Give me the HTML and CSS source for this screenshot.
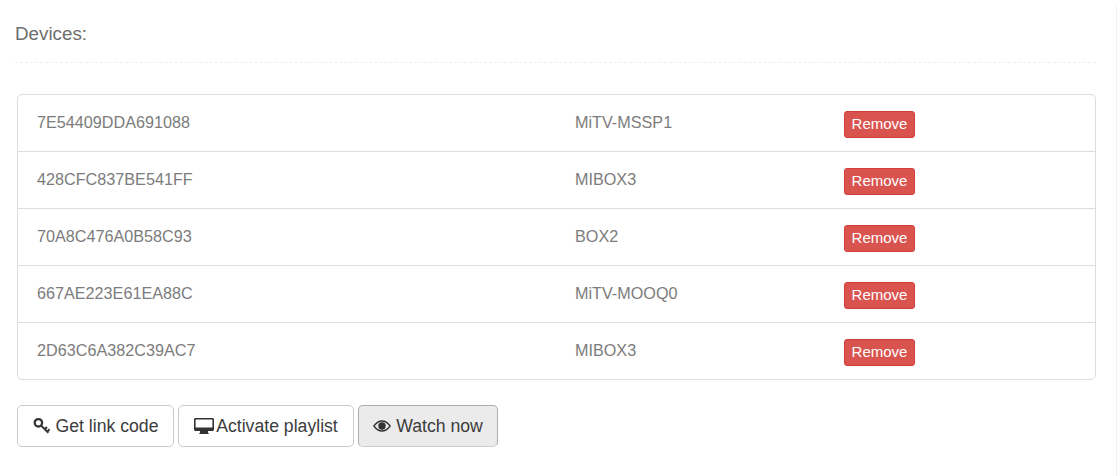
FILE: index.html
```html
<!DOCTYPE html>
<html lang="en">
  <head>
    <meta charset="UTF-8" />
    <title>Devices</title>
    <link rel="stylesheet" href="styles.css">
  </head>
  <body>
    <div class="panel">
      <h4 class="panel-title">Devices:</h4>

      <div class="devices">
        <div class="device">
          <span class="device-id">7E54409DDA691088</span>
          <span class="device-name">MiTV-MSSP1</span>
          <span class="device-action"><button class="btn-remove">Remove</button></span>
        </div>
        <div class="device">
          <span class="device-id">428CFC837BE541FF</span>
          <span class="device-name">MIBOX3</span>
          <span class="device-action"><button class="btn-remove">Remove</button></span>
        </div>
        <div class="device">
          <span class="device-id">70A8C476A0B58C93</span>
          <span class="device-name">BOX2</span>
          <span class="device-action"><button class="btn-remove">Remove</button></span>
        </div>
        <div class="device">
          <span class="device-id">667AE223E61EA88C</span>
          <span class="device-name">MiTV-MOOQ0</span>
          <span class="device-action"><button class="btn-remove">Remove</button></span>
        </div>
        <div class="device">
          <span class="device-id">2D63C6A382C39AC7</span>
          <span class="device-name">MIBOX3</span>
          <span class="device-action"><button class="btn-remove">Remove</button></span>
        </div>
      </div>

      <div class="actions">
        <button class="btn btn-link-code">
          <svg class="icon icon-key" viewBox="0 0 18 18" aria-hidden="true">
            <circle cx="5.4" cy="5.8" r="3.7" fill="none" stroke="#333" stroke-width="2.3" />
            <path d="M8.2 8.6 L15.4 15.8 M11.8 12.2 L14 10 M14.2 14.6 L16.6 12.2" fill="none" stroke="#333" stroke-width="2" />
          </svg>
          Get link code
        </button>
        <button class="btn btn-activate">
          <svg class="icon icon-tv" viewBox="0 0 20 18" aria-hidden="true">
            <path d="M1.4 1 H18.6 Q20 1 20 2.4 V12.6 Q20 14 18.6 14 H1.4 Q0 14 0 12.6 V2.4 Q0 1 1.4 1 Z M1.6 2.6 V10.6 H18.4 V2.6 Z" fill="#333" fill-rule="evenodd" />
            <path d="M6 14 H14 V15.6 L15 17 H5 L6 15.6 Z" fill="#333" />
          </svg>
          Activate playlist
        </button>
        <button class="btn btn-watch">
          <svg class="icon icon-eye" viewBox="0 0 18 12" aria-hidden="true">
            <path d="M0.8 6 Q4.6 1 9 1 Q13.4 1 17.2 6 Q13.4 11 9 11 Q4.6 11 0.8 6 Z" fill="none" stroke="#333" stroke-width="1.3" />
            <circle cx="9" cy="6" r="3.7" fill="#333" />
          </svg>
          Watch now
        </button>
      </div>
    </div>
  </body>
</html>
```

FILE: styles.css
```css
* {
  box-sizing: border-box;
}

body {
  margin: 0;
  background: #fff;
  font-family: "Liberation Sans", Arial, sans-serif;
  color: #7c7c7c;
}

.panel {
  width: 1117px;
  height: 476px;
  padding: 0 20px 0 15px;
  background: #fff;
  border-right: 1px solid #f1f1f1;
  border-radius: 0 8px 0 0;
}

.panel-title {
  height: 63px;
  margin: 0 0 31px;
  padding-top: 24px;
  border-bottom: 1px dashed #eee;
  font-size: 18.8px;
  line-height: 20px;
  font-weight: normal;
  color: #6e6e6e;
}

.devices {
  margin-left: 2px;
  width: 1079px;
  height: 286px;
  border: 1px solid #ddd;
  border-radius: 5px;
}

.device {
  display: flex;
  align-items: center;
  height: 57px;
  padding-left: 19px;
  border-bottom: 1px solid #ddd;
  font-size: 16.2px;
}

.device:last-child {
  height: 56px;
  border-bottom: 0;
}

.device-id {
  width: 538px;
  padding-bottom: 2px;
}

.device-name {
  width: 269px;
  padding-bottom: 2px;
}

.device-action {
  padding-top: 2px;
}

.btn-remove {
  display: block;
  width: 71px;
  height: 27px;
  padding: 0 0 2px;
  background: #d9534f;
  border: 1px solid #d43f3a;
  border-radius: 3px;
  font-family: inherit;
  font-size: 15px;
  color: #fff;
}

.actions {
  display: flex;
  gap: 4px;
  margin: 25px 0 0 2px;
}

.btn {
  display: flex;
  align-items: center;
  justify-content: center;
  height: 42px;
  padding: 0;
  background: #fff;
  border: 1px solid #ccc;
  border-radius: 5px;
  font-family: inherit;
  font-size: 17.65px;
  color: #3c3c3c;
}

.btn-link-code {
  width: 157px;
  gap: 5px;
}

.btn-activate {
  width: 176px;
  gap: 2px;
}

.btn-watch {
  width: 140px;
  gap: 5px;
  background: #ebebeb;
  border-color: #adadad;
  border-bottom-style: dotted;
}

.icon-key {
  width: 18px;
  height: 18px;
}

.icon-tv {
  width: 20px;
  height: 18px;
}

.icon-eye {
  width: 18px;
  height: 12px;
}
```
